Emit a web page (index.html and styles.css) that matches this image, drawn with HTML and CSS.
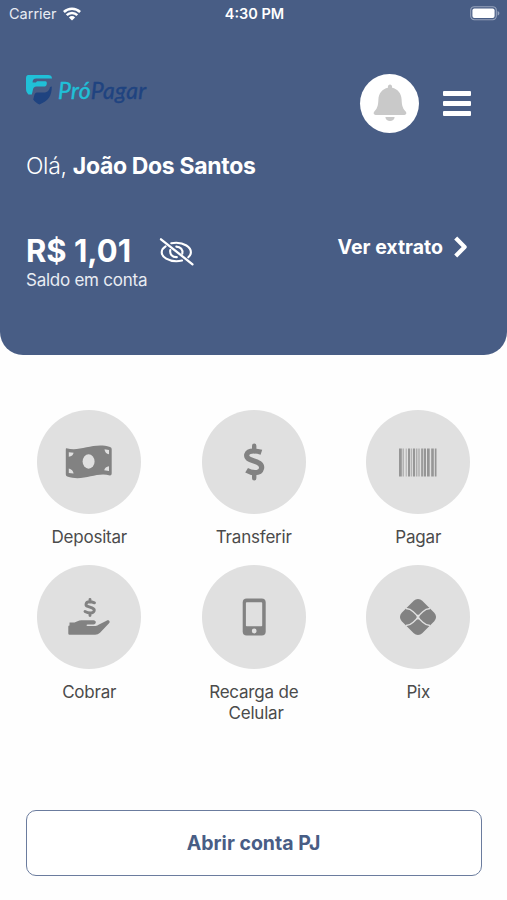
FILE: index.html
```html
<!DOCTYPE html>
<html lang="pt-BR">
    <head>
        <meta charset="utf-8">
        <meta name="viewport" content="width=device-width, initial-scale=1">
        <title>PróPagar</title>
        <link rel="stylesheet" href="styles.css">
    </head>
    <body>
        <header class="header">
            <div class="status-bar">
                <div class="status-left">
                    <span class="carrier">Carrier</span>
                    <svg width="18" height="14" viewBox="0 0 18 14" fill="none" stroke="#fff" stroke-width="2.5">
                        <path d="M0.9 5a11.5 11.5 0 0 1 16.2 0"/>
                        <path d="M3.7 8.2a7.5 7.5 0 0 1 10.6 0"/>
                        <path d="M9 13.4L5.9 10.4a4.4 4.4 0 0 1 6.2 0z" fill="#fff" stroke="none"/>
                    </svg>
                </div>
                <span class="clock">4:30 PM</span>
                <svg class="battery" width="30" height="15" viewBox="0 0 30 15">
                    <rect x="0.7" y="0.7" width="25.6" height="13" rx="3.6" fill="none" stroke="#96a3bc" stroke-width="1.1"/>
                    <rect x="2.4" y="2.4" width="22.2" height="9.6" rx="2" fill="#fff"/>
                    <path d="M27.6 5v4.6c2.4-.9 2.4-3.7 0-4.6z" fill="#96a3bc"/>
                </svg>
            </div>

            <div class="top">
                <div class="logo">
                    <svg width="27" height="31" viewBox="0 0 27 31">
                        <path d="M0 4C0 1.500 1.300 1 3.500 1H22C24.500 1 26 2 26 4.600H10.200C7.600 4.600 6.600 6 6.600 8.400H10C10.400 7.500 11 7.200 12 7.200H19.500C21.600 7.200 21.200 12.400 18.600 12.400H10.600C8 12.400 7.400 13.800 7 15.400L5.800 20.400H2.400C.6 18.600 0 17 0 14.600z" fill="#20c0d8"/>
                        <path d="M25.800 12.600C25.800 22 22.400 27 13.400 30.600C10.600 29 8.800 27.400 7.200 25.400L8.400 20.800C8.800 19.200 10 18.600 12 18.600H17.500C21 18.600 23.400 16.600 24 13z" fill="#1f4380"/>
                    </svg>
                    <span class="logo-text">Pró<b>Pagar</b></span>
                </div>
                <div class="bell">
                    <svg width="34" height="38" viewBox="0 0 34 38" fill="#c9c9c9">
                        <path d="M17 0.500C15.700 0.500 14.900 1.500 14.900 2.800V3.800C9.500 5 5.600 9.200 5.400 15.500C5.200 22.300 3.800 25 1.300 27.600C0 29.200 0.700 31 2.600 31H31.400C33.300 31 34 29.200 32.700 27.600C30.200 25 28.800 22.300 28.600 15.500C28.400 9.200 24.500 5 19.100 3.800V2.800C19.100 1.500 18.300 0.500 17 0.500z"/>
                        <path d="M12.400 33H21.600C21.600 38.300 12.400 38.300 12.400 33z"/>
                    </svg>
                </div>
                <div class="menu">
                    <span></span>
                    <span></span>
                    <span></span>
                </div>
            </div>

            <div class="hello">Olá, <b>João Dos Santos</b></div>

            <div class="account">
                <div class="balance">
                    <div class="balance-row">
                        <span class="value">R$ 1,01</span>
                        <svg class="eye" width="36" height="28" viewBox="0 0 36 28" fill="none" stroke="#fff" stroke-width="2.100" stroke-linecap="round">
                            <path d="M6.600 8.300C3.500 10.300 2.700 12.300 2.700 14.200C2.700 19.400 9.800 23.300 17.300 23.300C19.400 23.300 21.300 23 23 22.600"/>
                            <path d="M12.300 5.300C13.900 4.900 15.600 4.700 17.300 4.700C24.800 4.700 31.900 9 31.900 14.200C31.900 16.200 30.900 17.900 29.300 19.300"/>
                            <path d="M11.300 12C10.500 16.300 13.300 19.300 17.800 19.100"/>
                            <path d="M17.300 8.600C21.600 8.600 24.300 12 23.300 15.700"/>
                            <path d="M2 1.300L33.500 26.300" stroke-width="2.300"/>
                        </svg>
                    </div>
                    <div class="caption">Saldo em conta</div>
                </div>
                <div class="statement">
                    <span>Ver extrato</span>
                    <svg width="14" height="22" viewBox="0 0 14 22" fill="none" stroke="#fff" stroke-width="4.200" stroke-linejoin="round">
                        <path d="M1.700 2L10.600 11L1.700 20"/>
                    </svg>
                </div>
            </div>
        </header>

        <main class="options">
            <div class="option">
                <div class="circle">
                    <svg width="48" height="34" viewBox="0 0 48 34">
                        <path d="M1.500 3.200C15 7.500 28-3 45 2Q46.700 2.500 46.700 4V28.500Q46.700 30.500 45 30.500C31 26.500 19 37 2.200 31.600Q.8 31 .8 29.500V4.500Q.8 3 1.500 3.200z" fill="#828282"/>
                        <ellipse cx="23.600" cy="16.500" rx="6" ry="7.200" fill="#e0e0e0"/>
                        <path d="M3.800 7.300L8.600 7.700Q8 11.300 3.800 11.700zM3.800 23.500Q8 24.500 8.600 28.600L3.800 28zM39.500 4.200L44 5V9.300Q40 8.700 39.500 4.200zM44 21.300V26L39.200 25.300Q40 21.800 44 21.300z" fill="#e0e0e0"/>
                    </svg>
                </div>
                <span class="label">Depositar</span>
            </div>
            <div class="option">
                <div class="circle">
                    <svg width="22" height="38" viewBox="0 0 22 38" fill="none" stroke="#828282" stroke-width="5.200">
                        <path d="M18.400 9.300Q14.500 8 10.500 8C2.500 8 1.800 14.500 7 16.500L14.500 19.300C21 22 19.500 29.600 12 29.600Q7.500 29.600 3.600 27.200" stroke-linejoin="round"/>
                        <path d="M11.200 2.800V8M11.200 30V35.300" stroke-width="4.400" stroke-linecap="round"/>
                    </svg>
                </div>
                <span class="label">Transferir</span>
            </div>
            <div class="option">
                <div class="circle">
                    <svg width="38" height="29" viewBox="0 0 38 29" fill="#969696">
                        <rect x="0" y="0.500" width="2.800" height="28"/>
                        <rect x="3.700" y="0.500" width="0.900" height="28"/>
                        <rect x="6.800" y="0.500" width="0.700" height="28"/>
                        <rect x="9" y="0.500" width="2.200" height="28"/>
                        <rect x="12.400" y="0.500" width="0.700" height="28"/>
                        <rect x="14" y="0.500" width="2.100" height="28"/>
                        <rect x="17.300" y="0.500" width="1" height="28"/>
                        <rect x="19.500" y="0.500" width="1" height="28"/>
                        <rect x="22.200" y="0.500" width="1.700" height="28"/>
                        <rect x="24.700" y="0.500" width="2.300" height="28"/>
                        <rect x="28" y="0.500" width="2.700" height="28"/>
                        <rect x="32.200" y="0.500" width="2.600" height="28"/>
                        <rect x="35.800" y="0.500" width="1.700" height="28"/>
                    </svg>
                </div>
                <span class="label">Pagar</span>
            </div>
            <div class="option">
                <div class="circle">
                    <svg width="44" height="38" viewBox="0 0 44 38" fill="#828282">
                        <path d="M27.500 4.800Q25 3.800 22.500 3.800C18.500 3.800 18 7.500 20.800 8.400L25 9.800C28.700 11.200 27.600 15 23.500 15Q20.500 15 18 13.500M23 1.500V4M23 15V17.500" fill="none" stroke="#828282" stroke-width="2.900" stroke-linecap="round"/>
                        <path d="M2.500 24.400H7.500L10.500 23.200Q12.300 22.300 14.500 22.300H26.500C29.600 22.300 29.600 26.500 26.500 26.500H20.500Q19.500 26.500 19.500 27.200T20.500 27.900H28.500Q30.500 27.800 32 26.500L39.500 22.700C42 21.300 43.800 23.800 41.800 25.600L33 34.700Q31 36.700 28 36.700H2.500Q1.300 36.700 1.300 35.500V28.500Q1.300 27.500 2.500 27.500z"/>
                    </svg>
                </div>
                <span class="label">Cobrar</span>
            </div>
            <div class="option">
                <div class="circle">
                    <svg width="24" height="38" viewBox="0 0 24 38">
                        <rect x="0.700" y="0.600" width="23" height="37" rx="4" fill="#828282"/>
                        <rect x="3.900" y="4.300" width="16.300" height="23.900" rx="0.800" fill="#e0e0e0"/>
                        <circle cx="12.200" cy="33" r="2.400" fill="#e0e0e0"/>
                    </svg>
                </div>
                <span class="label">Recarga de <br>&nbsp;Celular</span>
            </div>
            <div class="option">
                <div class="circle">
                    <svg width="38" height="38" viewBox="0 0 38 38">
                        <rect x="4.500" y="4.500" width="29" height="29" rx="6" transform="rotate(45 19 19)" fill="#828282"/>
                        <path d="M7 10.500C11 10.700 12.200 11.700 14.200 13.700L17.300 16.800Q19 18.300 20.700 16.800L23.800 13.700C25.800 11.700 27 10.700 31 10.500M7 27.500C11 27.300 12.200 26.300 14.200 24.300L17.300 21.200Q19 19.700 20.700 21.200L23.800 24.300C25.800 26.300 27 27.300 31 27.500" fill="none" stroke="#e0e0e0" stroke-width="1.300"/>
                        <path d="M17.300 17.300L20.700 20.700M20.700 17.300L17.300 20.700" stroke="#e0e0e0" stroke-width="1.300"/>
                    </svg>
                </div>
                <span class="label">Pix</span>
            </div>
        </main>

        <button class="open-account">Abrir conta PJ</button>
    </body>
</html>
```

FILE: styles.css
```css
* {
    box-sizing: border-box;
}

body {
    margin: 0;
    height: 900px;
    background-color: #fefefe;
    font-family: Inter, "Liberation Sans", sans-serif;
    color: #4b4b4b;
    overflow: hidden;
}

svg {
    display: block;
    flex-shrink: 0;
}

b {
    font-weight: 700;
}

.header {
    height: 355px;
    background-color: #485d85;
    border-radius: 0 0 23px 23px;
    color: #fff;
}

/* status bar */
.status-bar {
    display: grid;
    grid-template-columns: 1fr auto 1fr;
    align-items: center;
    height: 27px;
    padding: 0 7px 0 9px;
    font-size: 14.5px;
}

.status-left {
    display: flex;
    align-items: center;
    gap: 6px;
}

.carrier {
    color: #e8ecf3;
}

.clock {
    font-weight: 600;
}

.battery {
    justify-self: end;
}

/* logo and actions */
.top {
    display: flex;
    align-items: center;
    height: 60px;
    margin: 46px 36px 0 26px;
}

.logo {
    display: flex;
    align-items: center;
    gap: 5px;
    margin-right: auto;
    margin-bottom: 27px;
}

.logo-text {
    font-family: Lato, sans-serif;
    font-style: italic;
    font-size: 23px;
    line-height: 26px;
    letter-spacing: 0.3px;
    color: #20c0d8;
    -webkit-text-stroke: 0.4px;
}

.logo-text b {
    font-weight: 400;
    color: #1f4380;
}

.bell {
    display: flex;
    align-items: center;
    justify-content: center;
    width: 59px;
    height: 59px;
    border-radius: 50%;
    background-color: #fff;
}

.menu {
    display: flex;
    flex-direction: column;
    gap: 5px;
    width: 28px;
    margin-left: 24px;
}

.menu span {
    height: 5px;
    border-radius: 1px;
    background-color: #fff;
}

.hello {
    margin: 18px 0 0 26px;
    font-size: 23px;
    line-height: 30px;
    letter-spacing: -0.33px;
    font-weight: 300;
}

/* balance */
.account {
    display: flex;
    justify-content: space-between;
    margin: 49px 39px 0 26px;
}

.balance-row {
    display: flex;
    align-items: center;
    height: 40px;
}

.value {
    font-size: 31px;
    font-weight: 700;
}

.eye {
    margin: 3px 0 0 28px;
}

.caption {
    font-size: 17px;
    line-height: 20px;
    letter-spacing: -0.25px;
    color: #e8ecf3;
}

.statement {
    display: flex;
    align-items: center;
    gap: 11px;
    height: 34px;
    font-size: 19.5px;
    font-weight: 700;
}

/* shortcuts */
.options {
    display: grid;
    grid-template-columns: repeat(3, 164.5px);
    grid-template-rows: 155px 190px;
    margin: 55px 0 0 7px;
}

.option {
    display: flex;
    flex-direction: column;
    align-items: center;
}

.circle {
    display: flex;
    align-items: center;
    justify-content: center;
    width: 104px;
    height: 104px;
    border-radius: 50%;
    background-color: #e0e0e0;
}

.label {
    margin-top: 13px;
    font-size: 17px;
    line-height: 21px;
    letter-spacing: -0.2px;
    text-align: center;
}

/* button */
.open-account {
    display: block;
    width: 456px;
    height: 66px;
    margin: 55px auto 0;
    border: 1.5px solid #6b7c9e;
    border-radius: 10px;
    background-color: #fff;
    font-family: inherit;
    font-size: 19.5px;
    font-weight: 700;
    color: #485d85;
}
```
